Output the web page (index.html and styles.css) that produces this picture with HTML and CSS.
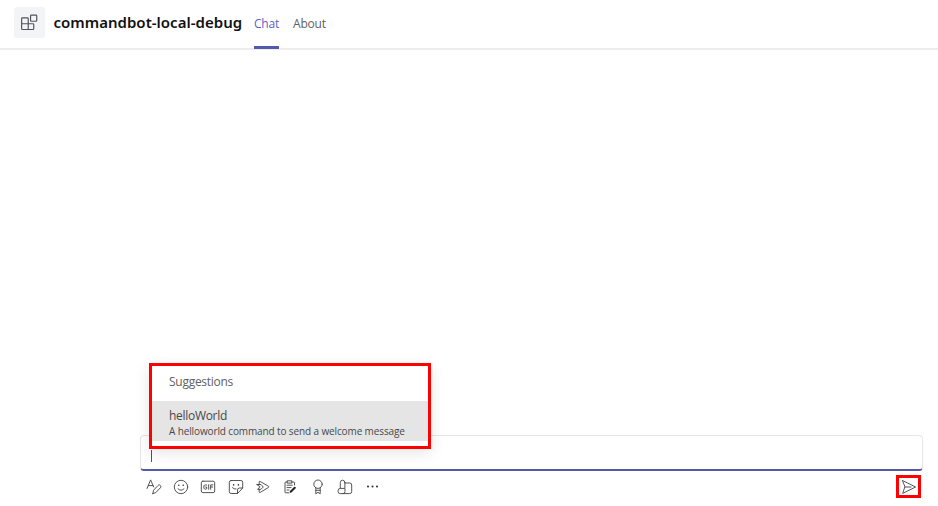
FILE: index.html
```html
<!DOCTYPE html>
<html lang="en">
<head>
<meta charset="utf-8">
<title>commandbot-local-debug</title>
<link rel="stylesheet" href="styles.css">
</head>
<body>
<header class="header">
  <div class="app-icon">
    <svg width="17" height="17" viewBox="0 0 16 16"><path d="M1.4 3.7H6Q6.8 3.7 6.8 4.5V9.2H11.2Q12 9.2 12 10V13.7Q12 14.6 11.2 14.6H1.4Q.6 14.6 .6 13.7V4.5Q.6 3.7 1.4 3.7ZM.6 9.2H6.8V14.6"/><rect x="9" y="1" width="5.8" height="5.8" rx=".7"/></svg>
  </div>
  <h1 class="title">commandbot-local-debug</h1>
  <nav class="tabs"><a class="tab active"><span>Chat</span></a><a class="tab about"><span>About</span></a></nav>
</header>
<main class="conversation"></main>
<section class="composer">
  <div class="input"><span class="caret"></span></div>
  <div class="toolbar">
    <div class="tools">
      <svg viewBox="0 0 16 16"><path d="M1 9.5 4.6 .9 7.7 8M2.4 6.6H7M6.8 14.6 7.6 11.2 12 6.5C13.3 4.9 16 7 14.4 8.8L9.8 13.6 6.8 14.6Z"/></svg>
      <svg viewBox="0 0 16 16"><circle cx="8" cy="8" r="6.7"/><path d="M5 9.8Q8 12.8 11 9.8"/><circle class="dot" cx="5.8" cy="6.3" r=".8"/><circle class="dot" cx="10.2" cy="6.3" r=".8"/></svg>
      <svg viewBox="0 0 16 16"><rect x="1.3" y="2.2" width="13.4" height="11.4" rx="1.6"/><path d="M6.7 6.1Q3.8 4.9 3.8 8T6.7 9.8V8H5.6M8.7 5.6V10.3M10.7 10.3V5.9H13M10.7 8H12.7"/></svg>
      <svg viewBox="0 0 16 16"><path d="M3.1 1.5H12.9Q14.7 1.5 14.7 3.3V9L9.5 14.5H3.1Q1.3 14.5 1.3 12.7V3.3Q1.3 1.5 3.1 1.5ZM14.7 9H11.5Q9.5 9 9.5 11V14.5M4.5 8.7Q6 10.5 8 10"/><circle class="dot" cx="5.6" cy="5.9" r=".8"/><circle class="dot" cx="10.4" cy="5.9" r=".8"/></svg>
      <svg viewBox="0 0 16 16"><path d="M4.2 5.5V3Q4.2 2 5.2 2.5L13.4 7.2Q14.3 7.9 13.4 8.5L5.2 13.4Q4.2 13.8 4.2 12.8V10.3M2 5.5H6L8.3 8 6 10.3H2.6L4.8 8Z"/></svg>
      <svg viewBox="0 0 16 16"><path d="M5.2 3H3.8Q3 3 3 3.8V13Q3 13.8 3.8 13.8H7M9.8 3H11.7Q12.5 3 12.5 3.8V6M5.5 1.8H9.8V4.1H5.5ZM5 6.2H10.3M5 8.6H9M5 11H7"/><path class="pen" d="M8.7 12.8 12.8 8.7"/></svg>
      <svg viewBox="0 0 16 16"><circle cx="8" cy="5.2" r="4.2"/><path d="M5.8 8.8V14.8L8 13.3 10.2 14.8V8.8M5.8 11.3H10.2"/></svg>
      <svg viewBox="0 0 16 16"><path d="M7.9 3.5V9.4H3.3Q1.1 9.4 1.1 11.7V12.5Q1.1 14.6 3.2 14.6H6Q8 14.6 8 12.5V10M3.3 9.2V3.6Q3.3 1.2 5.6 1.2T7.9 3.6M8 4H12.7Q14.7 4 14.7 6V12.6Q14.7 14.6 12.7 14.6H6"/></svg>
      <svg viewBox="0 0 16 16"><circle class="dot" cx="3" cy="7.5" r="1.05"/><circle class="dot" cx="7.5" cy="7.5" r="1.05"/><circle class="dot" cx="12" cy="7.5" r="1.05"/></svg>
    </div>
    <button class="send" aria-label="Send"><svg viewBox="0 0 16 16"><path d="M1.7 1.6 14.6 8 1.7 14.4 3.8 8ZM3.8 8H10"/></svg></button>
  </div>
  <div class="suggestions">
    <div class="heading"><span>Suggestions</span></div>
    <div class="item"><div class="name">helloWorld</div><div class="desc">A helloworld command to send a welcome message</div></div>
  </div>
</section>
</body>
</html>
```
FILE: styles.css
```css
* { box-sizing: border-box; }
body {
  margin: 0;
  height: 506px;
  display: flex;
  flex-direction: column;
  overflow: hidden;
  background: #fff;
  color: #616161;
  font-family: "Open Sans", "Noto Sans", sans-serif;
}
svg { display: block; fill: none; stroke: #424242; stroke-width: .9; stroke-linejoin: round; stroke-linecap: round; }
.dot { fill: #333; stroke: none; }
.pen { stroke: #222; stroke-width: 2; }
.header {
  flex: none;
  height: 50px;
  display: flex;
  padding-left: 14px;
  border-bottom: 2px solid #ededed;
}
.app-icon {
  width: 31px;
  height: 31px;
  margin-top: 7px;
  display: grid;
  place-items: center;
  background: #f3f4f6;
  border-radius: 3px;
}
.app-icon svg { stroke: #50535c; stroke-width: 1.1; }
.title {
  width: 200.5px;
  margin: 0 0 0 8.5px;
  color: #111;
  font: 600 15px/45px "Noto Sans", sans-serif;
  letter-spacing: .02px;
  white-space: nowrap;
}
.tabs { display: flex; gap: 14px; height: 49px; }
.tab { font-size: 12px; line-height: 48px; white-space: nowrap; letter-spacing: -.2px; }
.active { width: 25px; color: #5b5fc7; border-bottom: 3px solid #5558af; }
.conversation { flex: 1; }
.composer { position: relative; flex: none; height: 71px; margin: 0 15.5px 0 140px; }
.input {
  height: 36px;
  padding: 14px 10px 0;
  border: 1px solid #e6e6e6;
  border-bottom: 2px solid #5659a8;
  border-radius: 4px;
}
.caret { display: block; width: 1px; height: 12px; background: #555; }
.toolbar { display: flex; justify-content: space-between; align-items: flex-start; padding: 4px 1.5px 0 5.5px; }
.tools { display: flex; gap: 11.4px; padding-top: 4px; }
.tools svg { width: 16px; height: 16px; }
.send { width: 25px; height: 23px; padding: 0; border: 3px solid #f00; background: #fff; display: grid; place-items: center; }
.send svg { width: 16px; height: 16px; }
.suggestions {
  position: absolute;
  left: 9px;
  top: -72px;
  width: 282px;
  height: 86px;
  border: 3px solid #f00;
  background: #fff;
  box-shadow: 0 4px 14px rgba(0, 0, 0, .1);
}
.heading { height: 35px; padding-left: 17px; font-size: 12px; line-height: 32px; letter-spacing: -.27px; }
.item { height: 40px; padding: 6px 0 0 17px; background: #e5e5e5; color: #484848; white-space: nowrap; }
.name { font-size: 12px; line-height: 17px; letter-spacing: -.3px; }
.desc { font-size: 10px; line-height: 15px; letter-spacing: -.12px; }
```
